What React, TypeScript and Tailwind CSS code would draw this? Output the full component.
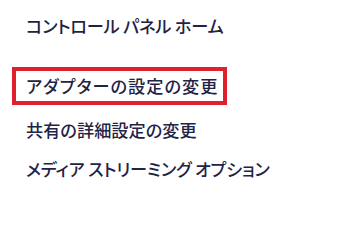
export default function App() {
  const font = "font-['Meiryo_UI','Noto_Sans_CJK_JP',sans-serif] [font-feature-settings:'palt'] text-[17.2px] font-medium leading-none text-[#1f2345]";
  return (
    <div className={`w-[340px] h-[228px] bg-white flex flex-col pl-[12px] ${font}`}>
      <div className="mt-[15px] h-[22px] pl-[14px] flex items-center whitespace-nowrap tracking-[-0.2px]">コントロール パネル ホーム</div>
      <div className="mt-[30px] w-[215px] h-[38px] border-[4px] border-[#e0202a] pl-[10px] flex items-center whitespace-nowrap tracking-[1px]">アダプターの設定の変更</div>
      <div className="mt-[6px] h-[38px] pl-[14px] flex items-center whitespace-nowrap">共有の詳細設定の変更</div>
      <div className="h-[40px] pl-[14px] flex items-center whitespace-nowrap tracking-[-0.2px]">メディア ストリーミング オプション</div>
    </div>
  );
}
